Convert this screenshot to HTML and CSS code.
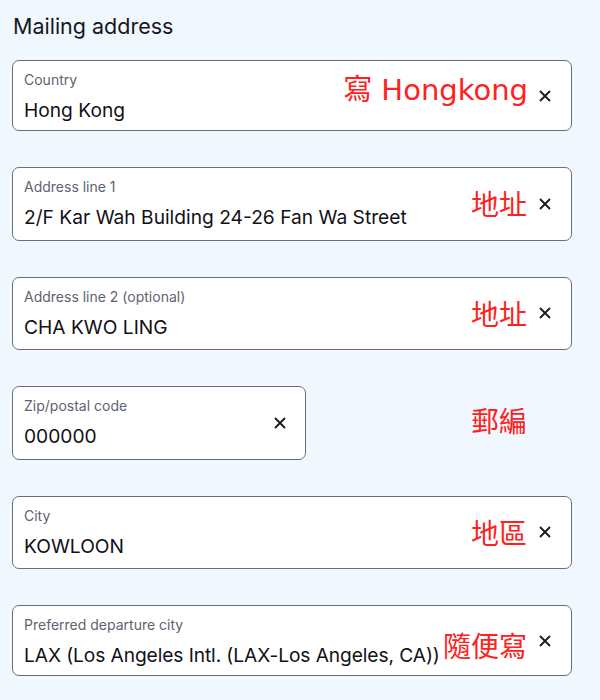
FILE: index.html
```html
<!DOCTYPE html>
<html lang="en">
<head>
<meta charset="utf-8">
<title>Mailing address</title>
<link rel="stylesheet" href="styles.css">
</head>
<body>
<main class="page">
  <h2 class="title">Mailing address</h2>
  <div class="form">
    <div class="row">
      <div class="field field-short">
        <div class="field-body">
          <span class="label">Country</span>
          <span class="value">Hong Kong</span>
        </div>
        <button class="clear" aria-label="Clear"><svg viewBox="0 0 12 12" width="12" height="12"><path d="M1 1L11 11M11 1L1 11" stroke="currentColor" stroke-width="1.9" fill="none"/></svg></button>
      </div>
      <span class="note note-country">寫 Hongkong</span>
    </div>
    <div class="row">
      <div class="field">
        <div class="field-body">
          <span class="label">Address line 1</span>
          <span class="value">2/F Kar Wah Building 24-26 Fan Wa Street</span>
        </div>
        <button class="clear" aria-label="Clear"><svg viewBox="0 0 12 12" width="12" height="12"><path d="M1 1L11 11M11 1L1 11" stroke="currentColor" stroke-width="1.9" fill="none"/></svg></button>
      </div>
      <span class="note">地址</span>
    </div>
    <div class="row">
      <div class="field">
        <div class="field-body">
          <span class="label">Address line 2 (optional)</span>
          <span class="value">CHA KWO LING</span>
        </div>
        <button class="clear" aria-label="Clear"><svg viewBox="0 0 12 12" width="12" height="12"><path d="M1 1L11 11M11 1L1 11" stroke="currentColor" stroke-width="1.9" fill="none"/></svg></button>
      </div>
      <span class="note">地址</span>
    </div>
    <div class="row">
      <div class="field field-half">
        <div class="field-body">
          <span class="label">Zip/postal code</span>
          <span class="value">000000</span>
        </div>
        <button class="clear" aria-label="Clear"><svg viewBox="0 0 12 12" width="12" height="12"><path d="M1 1L11 11M11 1L1 11" stroke="currentColor" stroke-width="1.9" fill="none"/></svg></button>
      </div>
      <span class="note note-zip">郵編</span>
    </div>
    <div class="row">
      <div class="field">
        <div class="field-body">
          <span class="label">City</span>
          <span class="value">KOWLOON</span>
        </div>
        <button class="clear" aria-label="Clear"><svg viewBox="0 0 12 12" width="12" height="12"><path d="M1 1L11 11M11 1L1 11" stroke="currentColor" stroke-width="1.9" fill="none"/></svg></button>
      </div>
      <span class="note">地區</span>
    </div>
    <div class="row">
      <div class="field field-short">
        <div class="field-body">
          <span class="label">Preferred departure city</span>
          <span class="value value-long">LAX (Los Angeles Intl. (LAX-Los Angeles, CA))</span>
        </div>
        <button class="clear" aria-label="Clear"><svg viewBox="0 0 12 12" width="12" height="12"><path d="M1 1L11 11M11 1L1 11" stroke="currentColor" stroke-width="1.9" fill="none"/></svg></button>
      </div>
      <span class="note note-dep">隨便寫</span>
    </div>
  </div>
</main>
</body>
</html>
```

FILE: styles.css
```css
html, body {
  margin: 0;
  padding: 0;
  background: #f0f7fe;
}

body {
  font-family: "Inter", "Liberation Sans", sans-serif;
  color: #1b1b22;
}

.page {
  padding: 12px 0 0 12px;
  width: 560px;
}

.title {
  margin: 0 0 20px 1px;
  font-size: 21.5px;
  line-height: 28px;
  font-weight: 400;
  color: #16161c;
}

.form {
  display: flex;
  flex-direction: column;
  gap: 36px;
}

.row {
  position: relative;
  width: 560px;
}

.field {
  box-sizing: border-box;
  height: 73.5px;
  display: flex;
  align-items: center;
  background: #ffffff;
  border: 1px solid #6b6e7a;
  border-radius: 7px;
  padding: 0 14px 0 11px;
}

.field-short {
  height: 71px;
}

.field-half {
  width: 294px;
  padding-right: 13px;
}

.field-body {
  flex: 1;
  min-width: 0;
  align-self: flex-start;
  padding-top: 10px;
  display: flex;
  flex-direction: column;
  gap: 9px;
}

.label {
  font-size: 14px;
  line-height: 18px;
  color: #60636f;
  white-space: nowrap;
}

.value {
  font-size: 19.2px;
  line-height: 24px;
  color: #111117;
  white-space: nowrap;
}

.value-long {
  letter-spacing: -0.1px;
}

.clear {
  width: 24px;
  height: 24px;
  padding: 0;
  border: 0;
  background: transparent;
  color: #1c1c22;
  display: flex;
  align-items: center;
  justify-content: center;
  flex: none;
}

.note {
  position: absolute;
  right: 45px;
  top: 25px;
  font-family: "DejaVu Sans", "Noto Sans CJK TC", sans-serif;
  font-size: 28px;
  line-height: 28px;
  color: #ff2020;
  white-space: nowrap;
}

.note-country {
  top: 16px;
  right: 44px;
  font-size: 29px;
}

.note-zip {
  top: 23px;
}

.note-dep {
  top: 29px;
}
```
